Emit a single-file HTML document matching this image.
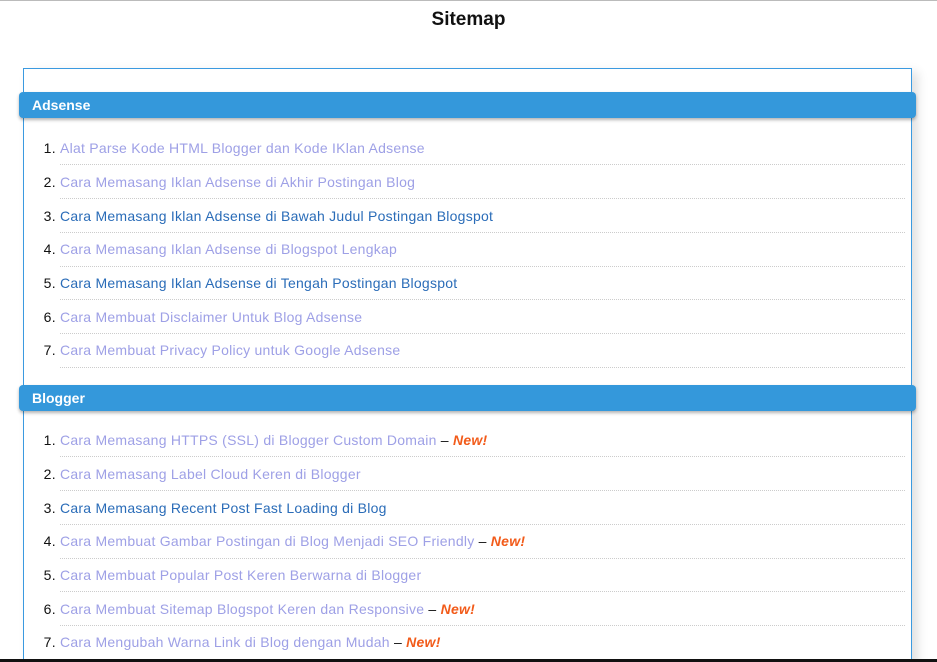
<!DOCTYPE html>
<html><head><meta charset="utf-8"><style>
html,body{margin:0;padding:0;background:#fff;width:937px;height:662px;overflow:hidden;position:relative;font-family:"Liberation Sans",sans-serif}
.topline{position:absolute;left:0;top:0;width:937px;height:1px;background:#bbb}
h1{position:absolute;top:8px;left:0;width:937px;text-align:center;margin:0;font-size:19px;font-weight:bold;color:#111;line-height:24px}
.box{position:absolute;left:23px;top:68px;width:887px;height:620px;border:1px solid #3b9ae0;background:#fff;box-shadow:6px 4px 10px rgba(0,0,0,.12)}
.hd{position:absolute;left:19px;width:897px;height:26px;background:#3498db;border-radius:4px;box-shadow:0 2px 3px rgba(0,0,0,.3);color:#fff;font-weight:bold;font-size:14px;line-height:26px;box-sizing:border-box;padding-left:13px}
ol{position:absolute;left:60px;width:845px;margin:0;padding:0;font-size:14px;letter-spacing:0.25px}
li{line-height:20px;padding:6.35px 0 6.35px;border-bottom:1px dotted #ccc;color:#111}
li::marker{color:#111}
a{text-decoration:none;color:#9ea0e6}
a.b{color:#2a6cb8}
.n{color:#f25b1a;font-weight:bold;font-style:italic}
.bot{position:absolute;left:0;top:659px;width:937px;height:3px;background:#111}
</style></head><body>
<div class="topline"></div>
<h1>Sitemap</h1>
<div class="box"></div>
<div class="hd" style="top:92px">Adsense</div>
<ol style="top:131.8px">
<li><a>Alat Parse Kode HTML Blogger dan Kode IKlan Adsense</a></li>
<li><a>Cara Memasang Iklan Adsense di Akhir Postingan Blog</a></li>
<li><a class="b">Cara Memasang Iklan Adsense di Bawah Judul Postingan Blogspot</a></li>
<li><a>Cara Memasang Iklan Adsense di Blogspot Lengkap</a></li>
<li><a class="b">Cara Memasang Iklan Adsense di Tengah Postingan Blogspot</a></li>
<li><a>Cara Membuat Disclaimer Untuk Blog Adsense</a></li>
<li><a>Cara Membuat Privacy Policy untuk Google Adsense</a></li>
</ol>
<div class="hd" style="top:385px">Blogger</div>
<ol style="top:423.8px">
<li><a>Cara Memasang HTTPS (SSL) di Blogger Custom Domain</a> – <span class="n">New!</span></li>
<li><a>Cara Memasang Label Cloud Keren di Blogger</a></li>
<li><a class="b">Cara Memasang Recent Post Fast Loading di Blog</a></li>
<li><a>Cara Membuat Gambar Postingan di Blog Menjadi SEO Friendly</a> – <span class="n">New!</span></li>
<li><a>Cara Membuat Popular Post Keren Berwarna di Blogger</a></li>
<li><a>Cara Membuat Sitemap Blogspot Keren dan Responsive</a> – <span class="n">New!</span></li>
<li><a>Cara Mengubah Warna Link di Blog dengan Mudah</a> – <span class="n">New!</span></li>
</ol>
<div class="bot"></div>
</body></html>
